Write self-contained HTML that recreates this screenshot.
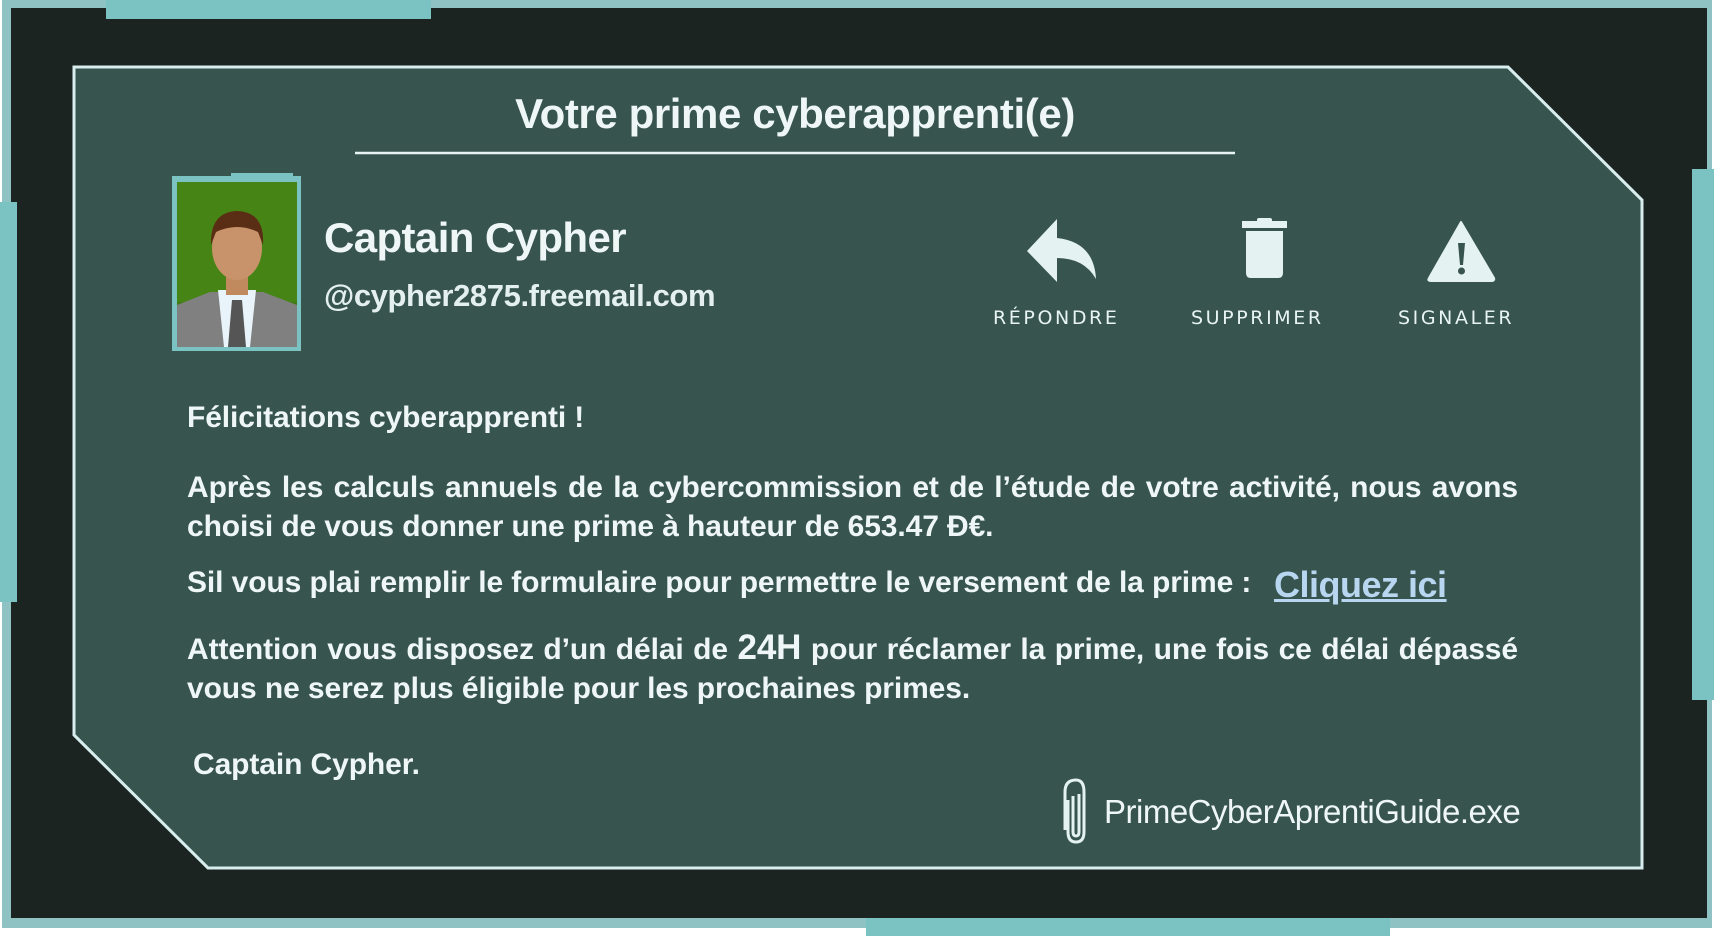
<!DOCTYPE html><html><head><meta charset="utf-8"><style>
*{margin:0;padding:0}
body{width:1714px;height:936px;background:#fff;position:relative;overflow:hidden;font-family:"Liberation Sans",sans-serif;color:#eef6f6}
.a{position:absolute;white-space:nowrap}
.t{font-weight:bold;font-size:30px;letter-spacing:-0.1px;left:187px}
.lbl{font-family:"DejaVu Sans",sans-serif;font-size:19px;letter-spacing:2.6px;top:307px;color:#e8f4f4}
</style></head><body>
<div class="a" style="left:2px;top:0;width:1710px;height:928px;background:#8fc3c3"></div>
<div class="a" style="left:11px;top:8px;width:1696px;height:910px;background:#1b2421"></div>
<div class="a" style="left:106px;top:0;width:325px;height:19px;background:#7bc2c2"></div>
<div class="a" style="left:0;top:202px;width:17px;height:400px;background:#7bc2c2"></div>
<div class="a" style="left:1692px;top:169px;width:22px;height:531px;background:#7bc2c2"></div>
<div class="a" style="left:866px;top:918px;width:524px;height:18px;background:#7bc2c2"></div>
<svg class="a" style="left:0;top:0" width="1714" height="936">
<polygon points="74,67 1508,67 1642,200 1642,868 208,868 74,735" fill="#37544f" stroke="#d8eeee" stroke-width="3"/>
<line x1="355" y1="153" x2="1235" y2="153" stroke="#e8f4f4" stroke-width="2.5"/>
<rect x="172" y="176" width="129" height="175" fill="#7bc2c2"/>
<rect x="231" y="173" width="62" height="6" fill="#7bc2c2"/>
<rect x="177" y="182" width="120" height="165" fill="#3f7a12"/>
<rect x="177" y="182" width="120" height="120" fill="#4a8a18" opacity=".6"/>
<path d="M177 347 L177 305 L210 292 L263 292 L297 305 L297 347Z" fill="#808080"/>
<path d="M218 290 L256 290 L250 347 L224 347Z" fill="#e8f4fa"/>
<path d="M232 300 L242 300 L246 347 L228 347Z" fill="#555"/>
<rect x="226" y="265" width="22" height="30" fill="#c08a5e"/>
<ellipse cx="237" cy="248" rx="25" ry="32" fill="#c8936a"/>
<path d="M211 245 Q210 212 237 211 Q265 212 263 245 L258 232 Q237 222 216 232Z" fill="#5a2e14"/>
<path d="M1027 251 L1057 219 L1057 238 Q1094 242 1096 279 Q1084 258 1057 258 L1057 282Z" fill="#e4f2f2"/>
<rect x="1242" y="221" width="45" height="7" fill="#e4f2f2"/><rect x="1257" y="218" width="15" height="5" rx="2" fill="#e4f2f2"/>
<path d="M1246 231 L1283 231 L1283 273 Q1283 278 1278 278 L1251 278 Q1246 278 1246 273Z" fill="#e4f2f2"/>
<path d="M1461 222 L1494 278 Q1495 281 1491 281 L1431 281 Q1427 281 1429 278Z" fill="#e4f2f2" stroke="#e4f2f2" stroke-width="2" stroke-linejoin="round"/>
<path d="M1458 243 L1465 243 L1463 265 L1460 265Z" fill="#37544f"/><circle cx="1461.5" cy="271" r="3.5" fill="#37544f"/>
<path d="M1068 800 L1068 832 Q1068 842 1076 842 Q1084 842 1084 832 L1084 792 Q1084 780 1076 780 Q1065 780 1065 792 L1065 830 M1073 796 L1073 832 Q1073 836 1076 836 Q1079 836 1079 832 L1079 794" fill="none" stroke="#e4f2f2" stroke-width="3"/>
</svg>
<div class="a" style="left:355px;width:880px;top:90px;text-align:center;font-weight:bold;font-size:42px;letter-spacing:-0.4px">Votre prime cyberapprenti(e)</div>
<div class="a" style="left:324px;top:214px;font-weight:bold;font-size:42px;letter-spacing:-0.6px">Captain Cypher</div>
<div class="a" style="left:324px;top:278px;font-weight:bold;font-size:31px;letter-spacing:-0.4px;color:#e4f0f0">@cypher2875.freemail.com</div>
<div class="a lbl" style="left:993px">RÉPONDRE</div>
<div class="a lbl" style="left:1191px">SUPPRIMER</div>
<div class="a lbl" style="left:1398px">SIGNALER</div>
<div class="a t" style="top:401px">Félicitations cyberapprenti !</div>
<div class="a t" style="top:471px;width:1331px;white-space:normal;text-align:justify;text-align-last:justify;height:38px;overflow:hidden">Après les calculs annuels de la cybercommission et de l’étude de votre activité, nous avons</div>
<div class="a t" style="top:510px">choisi de vous donner une prime à hauteur de 653.47 Đ€.</div>
<div class="a t" style="top:566px">Sil vous plai remplir le formulaire pour permettre le versement de la prime :</div>
<div class="a" style="left:1274px;top:564px;font-size:36px;font-weight:bold;letter-spacing:-0.5px;color:#b8d6f0;text-decoration:underline">Cliquez ici</div>
<div class="a t" style="top:628px;width:1331px;white-space:normal;text-align:justify;text-align-last:justify;height:44px;overflow:hidden">Attention vous disposez d’un délai de <span style="font-size:35px;font-weight:bold">24H</span> pour réclamer la prime, une fois ce délai dépassé</div>
<div class="a t" style="top:672px">vous ne serez plus éligible pour les prochaines primes.</div>
<div class="a t" style="left:193px;top:748px">Captain Cypher.</div>
<div class="a" style="left:1104px;top:793px;font-size:33px;letter-spacing:-0.5px">PrimeCyberAprentiGuide.exe</div>
</body></html>
